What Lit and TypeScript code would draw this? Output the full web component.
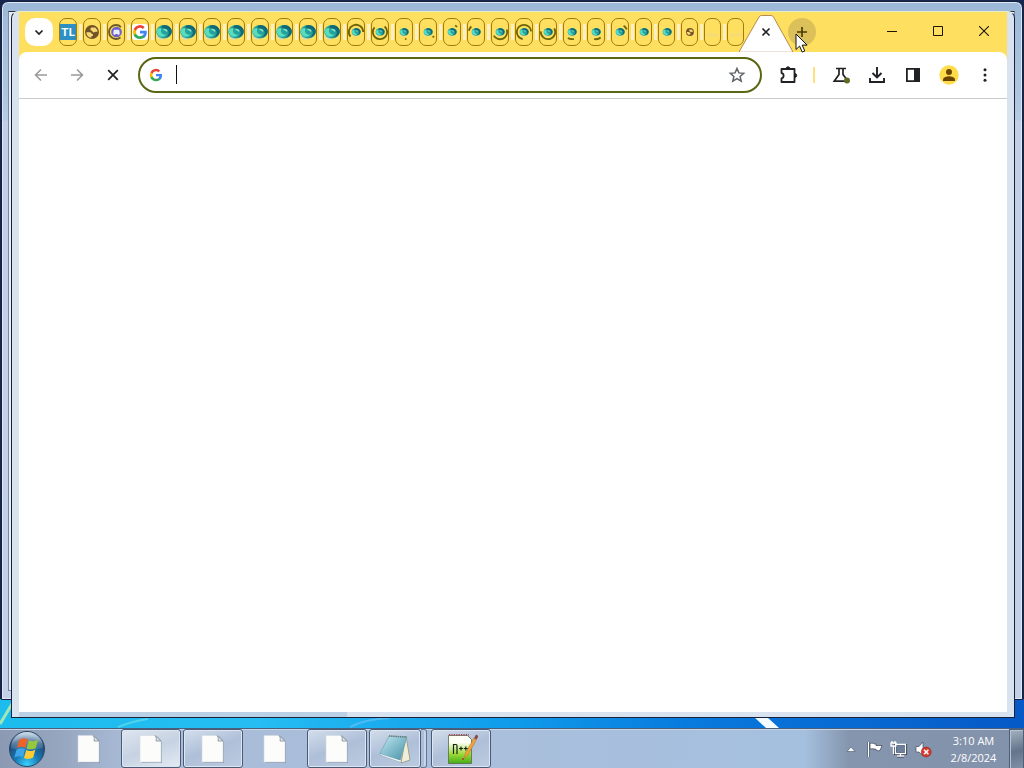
import { LitElement, html, svg, css, nothing } from "lit";
import { customElement, property } from "lit/decorators.js";

type Tab = { kind: string; title: string; from?: number; sweep?: number };

const swirl = (n: number): Tab[] =>
  Array.from({ length: n }, () => ({ kind: "swirl", title: "Swirl page" }));
const busy = (from: number, sweep: number): Tab => ({ kind: "busy", title: "Loading page", from, sweep });

const TABS: Tab[] = [
  { kind: "tl", title: "TL" },
  { kind: "globe", title: "Globe" },
  { kind: "chat", title: "Chat" },
  { kind: "google", title: "Google" },
  ...swirl(8),
  busy(140, 220),
  busy(-50, 270),
  busy(70, 12),
  busy(35, 14),
  busy(-65, 20),
  busy(190, 40),
  busy(-20, 170),
  busy(100, 255),
  busy(-30, 215),
  busy(75, 50),
  busy(50, 55),
  busy(-60, 40),
  busy(0, 0),
  busy(0, 0),
  { kind: "smallglobe", title: "Globe" },
  { kind: "blank", title: "New page" },
  { kind: "blank", title: "New page" },
];

const arc = (from: number, sweep: number, r: number) => {
  const p = (deg: number) => {
    const a = (deg * Math.PI) / 180;
    return `${(8 + r * Math.cos(a)).toFixed(2)} ${(8 + r * Math.sin(a)).toFixed(2)}`;
  };
  return `M${p(from)}A${r} ${r} 0 ${sweep > 180 ? 1 : 0} 1 ${p(from + sweep)}`;
};

const googleG = svg`
  <path fill="#4285f4" d="M14.8 8.2c0-.5 0-1-.1-1.4H8v2.7h3.8a3.3 3.3 0 0 1-1.4 2.1v1.8h2.3c1.3-1.2 2.1-3 2.1-5.2z"/>
  <path fill="#34a853" d="M8 15c1.900 0 3.500-.6 4.700-1.700l-2.300-1.700c-.6.400-1.400.700-2.400.700-1.800 0-3.400-1.200-3.900-2.900H1.700v1.800A7 7 0 0 0 8 15z"/>
  <path fill="#fbbc05" d="M4.100 9.400a4.200 4.200 0 0 1 0-2.700V4.900H1.700a7 7 0 0 0 0 6.300z"/>
  <path fill="#ea4335" d="M8 3.800c1 0 2 .4 2.700 1.100l2-2A7 7 0 0 0 1.700 4.900l2.400 1.800C4.600 5 6.200 3.800 8 3.800z"/>`;

const globe = svg`
  <circle cx="8" cy="8" r="7" fill="#70522a"/>
  <path fill="#f8d873" d="M2.400 8.200h3.200c1.600 0 2 .8 2 1.700h1.300v2.200H7.500v1.500C4.500 13.500 2.200 11.200 2.400 8.200zM7.500 3.600h3.400c1.500.9 2.500 2.300 2.700 4.200h-2.400c-.6.900-1.600.9-2.400.3-.5-.4-.5-1.500-1.500-1.500C6.200 6.600 6.300 3.700 7.500 3.600z"/>`;

const ball = svg`
  <path d="M1 11.500c1.500 2.500 4 3.500 6.500 3" stroke="#cfd9c4" stroke-width="1.500" fill="none"/>
  <ellipse cx="8" cy="7.700" rx="7.800" ry="6.700" fill="#27a29b"/>
  <path fill="#116a76" d="M7 1.200c5-.8 9 2.800 8.800 6.300-.2 3.600-3 5.600-6 6 2.400-1.900 3.500-4 2.700-6C11.500 4.900 9 3.700 5.500 4 5.200 2.700 5.800 1.500 7 1.200z"/>
  <path fill="#58dcc0" d="M1 5.800c1-1.400 2.800-1.900 4.600-1.100-1 1.600-.8 3.800.9 5.100 1.200.9 2.600 1.100 3.600.8-1 1.900-4 2.900-6.500 1.600C1.300 11 .2 8 1 5.800z"/>
  <path d="M7.500 6c1.600-.7 3.200-.1 3.300 1.500" stroke="#8fecd4" stroke-width="1.300" fill="none"/>`;

@customElement("tab-icon")
class TabIcon extends LitElement {
  static styles = css`
    :host { display: block; width: 16px; height: 16px; }
    .art { display: block; width: 16px; height: 16px; overflow: visible; }
    .badge { font: 700 12px "Lato", "Liberation Sans", sans-serif; fill: #fff; }
  `;
  @property({ attribute: false }) tab!: Tab;

  private art() {
    const t = this.tab;
    switch (t.kind) {
      case "tl":
        return svg`<rect width="16" height="16" fill="#2d8fc4"/><text class="badge" x="8" y="12" text-anchor="middle">TL</text>`;
      case "globe":
        return globe;
      case "chat":
        return svg`<path d="${arc(50, 265, 7)}" fill="none" stroke="#6b5a2a" stroke-width="1.800"/>
          <circle cx="8.500" cy="8" r="5.300" fill="#6b63c9"/>
          <path d="M5.300 10.200c0-2.800.5-4.500 1-4.500h4.400c.6 0 1 1.700 1 4.500l-1.500.7-.8-.8H7.600l-.8.8z" fill="#eceafc"/>`;
      case "google":
        return svg`<rect width="16" height="16" rx="3" fill="#fff"/>${googleG}`;
      case "swirl":
        return ball;
      case "busy":
        return svg`<g transform="translate(3.500 3.500) scale(.58)">${ball}</g>
          ${t.sweep ? svg`<path d="${arc(t.from!, t.sweep, 7.2)}" fill="none" stroke="#6f6305" stroke-width="1.800"/>` : nothing}`;
      case "smallglobe":
        return svg`<g transform="translate(3.500 3.500) scale(.56)">${globe}</g>`;
      default:
        return svg`<path d="M2 11h12" stroke="#f6da78" stroke-width="3"/>`;
    }
  }
  render() {
    return html`<svg class="art" viewBox="0 0 16 16" aria-hidden="true">${this.art()}</svg>`;
  }
}

@customElement("browser-window")
class BrowserWindow extends LitElement {
  static styles = css`
    :host { display: flex; flex-direction: column; box-sizing: border-box; background: #fff; }
    svg { display: block; flex: none; }
    button { border: 0; padding: 0; margin: 0; background: none; color: #202124; display: grid; place-items: center; flex: none; }
    .strip { display: flex; align-items: center; height: 40px; padding-left: 6px; background: #ffdf60; }
    .search { width: 28px; height: 28px; border-radius: 10px; background: #fff; margin-right: 6px; }
    .tabs { display: flex; gap: 6px; }
    .tab { position: relative; box-sizing: border-box; width: 18px; height: 28px; border: 1px solid #a17b10; border-radius: 7px; }
    .tab.slim { width: 17px; }
    .tab + .tab::before { content: ""; position: absolute; left: -5px; top: 5px; width: 3px; height: 16px; background: #fdf0c0; }
    .active { position: relative; align-self: stretch; width: 54px; margin-left: -5px; }
    .shape { position: absolute; left: 0; bottom: 0; }
    .close { position: relative; width: 54px; height: 40px; }
    .plus { width: 28px; height: 28px; border-radius: 50%; background: #dcc15b; margin-left: -5px; position: relative; }
    .caption { display: flex; margin-left: auto; align-self: stretch; }
    .caption button { width: 46px; height: 38px; }
    .bar-back { background: #ffdf60; }
    .bar { display: flex; align-items: center; height: 46px; border-bottom: 1px solid #c9cacc; border-radius: 8px 8px 0 0; background: #fff; padding: 0 8px; }
    .nav, .tools { display: flex; gap: 8px; }
    .nav button, .tools button { width: 28px; height: 28px; }
    .nav .off { color: #9a9b9d; }
    .box { flex: 1; display: flex; align-items: center; box-sizing: border-box; height: 36px; min-width: 0; margin: 0 12px 0 11px; padding: 0 9px 0 8px; border: 2px solid #5b6614; border-radius: 18px; background: #fff; }
    .caret { width: 1px; height: 19px; margin: 0 0 2px 12px; background: #111; }
    .field { flex: 1; min-width: 0; border: 0; outline: 0; padding: 0; background: none; font: 14px "Open Sans", sans-serif; color: #202124; }
    .star { color: #5f6368; width: 28px; height: 28px; }
    .rule { width: 2px; height: 16px; align-self: center; background: #ffe07a; margin: 0 4px 0 3px; }
    .page { flex: 1; }
  `;
  render() {
    return html`
      <div class="strip">
        <button class="search" aria-label="Search tabs">
          <svg width="16" height="16" viewBox="0 0 16 16" fill="none" stroke="currentColor" stroke-width="1.700"><path d="M4.500 6.500L8 10l3.500-3.500"/></svg>
        </button>
        <div class="tabs">
          ${TABS.map((t, i) => html`<button class="tab ${i > 23 ? "slim" : ""}" aria-label=${t.title}><tab-icon .tab=${t}></tab-icon></button>`)}
        </div>
        <div class="active">
          <svg class="shape" width="54" height="37" viewBox="0 0 54 37"><path d="M0 37L20 2Q21 .5 22.500 .5H32Q33.500 .5 34.500 2L54 37z" fill="#fff" stroke="#9b7440" stroke-width=".8"/><path d="M1 37H53" stroke="#fff" stroke-width="1"/></svg>
          <button class="close" aria-label="Close tab"><svg width="16" height="16" viewBox="0 0 16 16" stroke="currentColor" stroke-width="1.600"><path d="M4.500 4.500l7 7M11.500 4.500l-7 7"/></svg></button>
        </div>
        <button class="plus" aria-label="New tab"><svg width="16" height="16" viewBox="0 0 16 16" stroke="#4b3d0b" stroke-width="1.700"><path d="M8 3v10M3 8h10"/></svg></button>
        <div class="caption">
          <button aria-label="Minimize"><svg width="10" height="10" viewBox="0 0 10 10" stroke="#1c1500"><path d="M0 5.500h10"/></svg></button>
          <button aria-label="Maximize"><svg width="10" height="10" viewBox="0 0 10 10" fill="none" stroke="#1c1500"><path d="M.5.5h9v9H.5z"/></svg></button>
          <button aria-label="Close"><svg width="10" height="10" viewBox="0 0 10 10" stroke="#1c1500" stroke-width="1.100"><path d="M0 0l10 10M10 0L0 10"/></svg></button>
        </div>
      </div>
      <div class="bar-back"><div class="bar">
        <div class="nav">
          <button class="off" aria-label="Back"><svg width="16" height="16" viewBox="0 0 16 16" fill="none" stroke="currentColor" stroke-width="1.600"><path d="M14 8H3M8 2.500L2.500 8 8 13.500"/></svg></button>
          <button class="off" aria-label="Forward"><svg width="16" height="16" viewBox="0 0 16 16" fill="none" stroke="currentColor" stroke-width="1.600"><path d="M2 8h11M8 2.500L13.500 8 8 13.500"/></svg></button>
          <button aria-label="Stop"><svg width="16" height="16" viewBox="0 0 16 16" stroke="currentColor" stroke-width="1.700"><path d="M3.200 3.200l9.600 9.600M12.800 3.200l-9.600 9.600"/></svg></button>
        </div>
        <div class="box">
          <svg width="16" height="16" viewBox="-1 -1 18 18">${googleG}</svg>
          <span class="caret"></span>
          <input class="field" type="text" aria-label="Address and search bar" />
          <button class="star" aria-label="Bookmark"><svg width="18" height="18" viewBox="0 0 18 18" fill="none" stroke="currentColor" stroke-width="1.500"><path d="M9 2.500l1.900 4.400 4.800.4-3.600 3.200 1.100 4.700L9 12.700l-4.200 2.500 1.100-4.700-3.600-3.200 4.800-.4z"/></svg></button>
        </div>
        <div class="tools">
          <button aria-label="Extensions"><svg width="20" height="20" viewBox="0 0 20 20" fill="none" stroke="currentColor" stroke-width="1.800" stroke-linejoin="round"><path d="M3.500 4h13v13h-13v-3.700c2.800-.5 2.800-4.800 0-5.300z"/><path d="M8 4a2 2.200 0 0 1 4 0zM16.500 8.500a2.200 2 0 0 1 0 4z" fill="currentColor" stroke-width="1"/></svg></button>
          <span class="rule"></span>
          <button aria-label="Experiments"><svg width="20" height="20" viewBox="0 0 20 20" fill="none" stroke="currentColor" stroke-width="1.700"><path d="M5 3.500h10M8 4v5.500l-4.800 6.700h12M12 4v5.500l3 4"/><circle cx="16" cy="15.500" r="3" fill="#5d6b25" stroke="none"/></svg></button>
          <button aria-label="Downloads"><svg width="20" height="20" viewBox="0 0 20 20" fill="none" stroke="currentColor" stroke-width="1.900"><path d="M10 2v10M5.500 8L10 12.500 14.500 8M3 13v4h14v-4"/></svg></button>
          <button aria-label="Side panel"><svg width="20" height="20" viewBox="0 0 20 20" fill="none" stroke="currentColor" stroke-width="1.800"><path d="M3.900 3.900h12.200v12.200H3.900z"/><path d="M11 3h6v14h-6z" fill="currentColor" stroke="none"/></svg></button>
          <button aria-label="Profile"><svg width="20" height="20" viewBox="0 0 20 20"><circle cx="10" cy="10" r="9.700" fill="#ffdc4a"/><circle cx="10" cy="7" r="3" fill="#6b4400"/><path d="M4 16v-1.500c0-2.300 4-3.200 6-3.200s6 .9 6 3.200V16z" fill="#6b4400"/></svg></button>
          <button aria-label="Menu"><svg width="16" height="16" viewBox="0 0 16 16" fill="currentColor"><circle cx="8" cy="2.700" r="1.500"/><circle cx="8" cy="8" r="1.500"/><circle cx="8" cy="13.300" r="1.500"/></svg></button>
        </div>
      </div></div>
      <main class="page"></main>`;
  }
}

@customElement("task-bar")
class TaskBar extends LitElement {
  static styles = css`
    :host { display: flex; align-items: stretch; box-sizing: border-box; height: 40px; border-top: 1px solid #4a5f7b; box-shadow: inset 0 1px #c8d5e4;
      background: linear-gradient(90deg, #8b9ab2 0, #97a6bf 60px, #a9bcd8 130px, #a9bfdc 500px, #a5c0df calc(100% - 220px), #8495ad calc(100% - 175px), #8292aa 100%); }
    button { display: grid; place-items: center; border: 0; padding: 0; margin: 0; background: none; flex: none; }
    svg { display: block; }
    .start { width: 54px; }
    .apps { display: flex; gap: 2px; padding-left: 5px; }
    .app { box-sizing: border-box; width: 60px; border: 1px solid transparent; border-radius: 3px; }
    .open { border-color: #4a5a74; background: linear-gradient(160deg, #d3deec, #aebfd8 50%, #bccbe0); box-shadow: inset 0 0 0 1px #dde6f1; }
    .front { background: linear-gradient(160deg, #dde5ef, #c6d2e3 50%, #e3eaf3); }
    .stack { width: 52px; }
    .edges { box-sizing: border-box; width: 6px; margin: 0 2px 0 -2px; border: solid #63748f; border-width: 1px 1px 1px 0; border-radius: 0 3px 3px 0; box-shadow: inset -2px 0 #c9d6e7; }
    .tray { display: flex; align-items: center; margin-left: auto; }
    .icon { width: 24px; height: 30px; }
    .clock { width: 69px; margin: 0 1px 0 4px; color: #fff; text-align: center; font: 11px/17px "Open Sans", "Noto Sans", sans-serif; }
    .line { display: block; }
    .show { align-self: stretch; box-sizing: border-box; width: 15px; border: 1px solid #4f5f76; border-bottom: 0; background: linear-gradient(165deg, #a5b1c1, #64748a 55%, #8090a5); box-shadow: inset 1px 1px #b8c3d1; }
  `;
  private page() {
    return html`<svg width="26" height="30" viewBox="0 0 26 30"><path d="M3.500 2.500h16l4.500 5V29H3.500z" fill="#76849b" opacity=".6"/><path d="M2 1.500h15.500L23 7v21H2z" fill="#fcfcfa" stroke="#d5dae0" stroke-width=".6"/><path d="M17 1.500c2 1.500 1 4.500 1 5.500h5z" fill="#dfe5e8" stroke="#7e8c99" stroke-width=".8"/></svg>`;
  }
  render() {
    return html`
      <button class="start" aria-label="Start">
        <svg width="38" height="38" viewBox="0 0 38 38">
          <defs>
            <radialGradient id="orb" cx=".5" cy=".95" r=".9"><stop offset="0" stop-color="#38d3ff"/><stop offset=".4" stop-color="#1779b5"/><stop offset=".8" stop-color="#1f4876"/><stop offset="1" stop-color="#7fa0bd"/></radialGradient>
            <linearGradient id="shine" x2="0" y2="1"><stop offset="0" stop-color="#e3eef7" stop-opacity=".75"/><stop offset="1" stop-color="#c2d9ea" stop-opacity=".1"/></linearGradient>
          </defs>
          <circle cx="19" cy="19" r="17.500" fill="url(#orb)" stroke="#2b4665"/>
          <path d="M3 18a16 16 0 0 1 32 0c-9 3-22 3-32 0z" fill="url(#shine)"/>
          <path d="M11.200 10c3-2.400 6-2 8.500-.4l-2.300 8.200c-2.500-1.500-5.400-1.500-8.500.4z" fill="#ee6327"/>
          <path d="M20.900 10.200c2.800 1.400 5.800 1.400 9.200-.6l-2.300 8.300c-3.300 1.900-6.300 1.800-9.200.5z" fill="#94c83d"/>
          <path d="M8.500 19.700c3.200-2 6.200-1.900 8.600-.4l-2.200 8c-2.600-1.500-5.400-1.400-8.600.5z" fill="#3ea5e8"/>
          <path d="M18.200 20c2.800 1.300 5.900 1.300 9.200-.6l-2.200 8.200c-3.300 1.900-6.400 1.800-9.200.5z" fill="#ffcb35"/>
        </svg>
      </button>
      <div class="apps">
        <button class="app" aria-label="Document">${this.page()}</button>
        <button class="app open front" aria-label="Document">${this.page()}</button>
        <button class="app open" aria-label="Document">${this.page()}</button>
        <button class="app" aria-label="Document">${this.page()}</button>
        <button class="app open" aria-label="Document">${this.page()}</button>
        <button class="app open stack" aria-label="Notepad">
          <svg width="34" height="32" viewBox="0 0 34 32"><defs><linearGradient id="np" x2="1" y2="1"><stop offset="0" stop-color="#c4e8f0"/><stop offset=".6" stop-color="#76b4c5"/><stop offset="1" stop-color="#4c8fa5"/></linearGradient></defs>
            <path d="M28 3l4 24-9 3z" fill="#f1eed8" stroke="#8c8a70" stroke-width=".7"/><path d="M2 22l21 7.500V27L3 20z" fill="#fafafa" stroke="#84a2aa" stroke-width=".5"/><path d="M11 3l18 1-7 23L2 20.500z" fill="url(#np)" stroke="#6a9eac" stroke-width=".6"/><path d="M11 3l17.500 1" stroke="#677" stroke-width="1.600" stroke-dasharray="1.200 1"/></svg>
        </button>
        <span class="edges"></span>
        <button class="app open" aria-label="Text editor">
          <svg width="34" height="34" viewBox="0 0 34 34"><defs><linearGradient id="ed" x2="0" y2="1"><stop offset=".25" stop-color="#fdfef5"/><stop offset=".65" stop-color="#9edb3a"/><stop offset="1" stop-color="#45ac16"/></linearGradient></defs>
            <path d="M4.500 3.500h19l4 4v24h-23z" fill="url(#ed)" stroke="#5a6a4c" stroke-width=".8"/><path d="M5 2.800h20" stroke="#a33f55" stroke-width="1.400" stroke-dasharray="1.200 1.200"/><path d="M9.500 22V12.500h2.500q1 0 1 1.500v8M15 16.500h4M17 14.500v4M19.800 16.500h4M21.800 14.500v4" fill="none" stroke="#142514" stroke-width="1.200"/><path d="M20.500 26l1-5L30 6l2.500 1.500L24 23z" fill="#f2a13b" stroke="#a8702c" stroke-width=".5"/><path d="M30 6.200L32 2.500l2.500 1.600-2 3.500z" fill="#8b4a42"/><path d="M18 27h2" stroke="#b43326" stroke-width="1.500"/></svg>
        </button>
      </div>
      <div class="tray">
        <button class="icon" aria-label="Show hidden icons"><svg width="10" height="8" viewBox="0 0 10 8"><path d="M1 6.500L5 2l4 4.500z" fill="#fff" stroke="#44546b" stroke-width=".6"/></svg></button>
        <button class="icon" aria-label="Action center"><svg width="18" height="18" viewBox="0 0 18 18"><path d="M2.500 2v15" stroke="#354358" stroke-width="3"/><path d="M2.500 2v15" stroke="#fff" stroke-width="1.500"/><path d="M4 3.500c3-1.300 4 .8 6 .6v1.400h6l-2 5c-2 .8-3-.5-4.300-.7V9C7.500 9.200 6.500 8.500 4 9z" fill="#fff" stroke="#354358" stroke-width=".7"/></svg></button>
        <button class="icon" aria-label="Network"><svg width="18" height="18" viewBox="0 0 18 18" fill="none"><path d="M5.500 5.500h10v8h-10zM7 16h7M10.500 14v2" stroke="#2d3b50" stroke-width="3.200"/><path d="M5.500 4.500h10v9h-10zM7 16h7M10.500 14v2M1 3h5v3H1zM3.500 6v8M2 1v2M5 1v2" stroke="#fff" stroke-width="1.300"/><path d="M6.500 5.500h8.500v7H6.500z" fill="#6d7f98"/></svg></button>
        <button class="icon" aria-label="Volume muted"><svg width="18" height="18" viewBox="0 0 18 18"><path d="M2 6.500h3L9 2v14l-4-4H2z" fill="#fff" stroke="#415067" stroke-width=".7"/><circle cx="12.200" cy="12" r="5" fill="#d6372e" stroke="#8d2525" stroke-width=".5"/><path d="M10 9.800l4.400 4.400M14.400 9.800L10 14.200" stroke="#fff" stroke-width="1.600"/></svg></button>
        <time class="clock"><span class="line">3:10 AM</span><span class="line">2/8/2024</span></time>
        <button class="show" aria-label="Show desktop"></button>
      </div>`;
  }
}

@customElement("app-root")
class AppRoot extends LitElement {
  static styles = css`
    :host { display: flex; flex-direction: column; height: 100vh; min-height: 400px; overflow: hidden; background: #101a3c; }
    .desk { position: relative; flex: 1; overflow: hidden; background: linear-gradient(90deg, #1cbcee 0, #25bdf2 25%, #0f9bea 50%, #0879dd 68%, #0659c7 100%); }
    .desk::before { content: ""; position: absolute; inset: 0 0 29px; background: #17264f; }
    .streaks { position: absolute; left: 0; bottom: 0; width: 100%; height: 30px; }
    .back { position: absolute; inset: 1px 1px 28px 1px; box-sizing: border-box; border: 1px solid #17213c; border-radius: 7px 7px 0 0; background: linear-gradient(#9db8d8 0, #a9c1dd 60px, #b5cae3 118px, #c3cfe6 119px, #c2d0e8 100%); box-shadow: inset 0 0 0 1px #dce8f5; }
    .inner { position: absolute; inset: 9px 7px 8px 6px; background: #e8edf5; border: 1px solid #77889f; border-top-color: #26324a; }
    .front { position: absolute; inset: 11px 9px 10px 11px; box-sizing: border-box; display: flex; border: 1px solid #17213c; border-radius: 7px 7px 0 0; border-top-color: #e8edc9; padding: 0 7px 5px; background: #d8e3ef; }
    .progress { position: absolute; left: 7px; bottom: 0; width: 328px; height: 5px; background: #b9d0e5; }
    .front browser-window { flex: 1; min-width: 0; position: relative; }
    .pointer { position: absolute; left: 795px; top: 33px; }
  `;
  render() {
    return html`
      <div class="desk">
        <svg class="streaks" viewBox="0 0 1024 30" preserveAspectRatio="none" aria-hidden="true"><path d="M0 26L12 6" stroke="#9fe8b5" stroke-width="3"/><path d="M118 29q15-6 30-8" stroke="#6fe0ea" stroke-width="2" fill="none" opacity=".6"/><path d="M350 29q15-8 40-9" stroke="#63bff5" stroke-width="2" fill="none" opacity=".7"/><path d="M754 19h13l12 11h-13z" fill="#f3fbff"/></svg>
        <div class="back"><div class="inner"></div></div>
        <div class="front">
          <browser-window></browser-window>
          <div class="progress"></div>
        </div>
        <svg class="pointer" width="13" height="21" viewBox="0 0 13 21" aria-hidden="true"><path d="M1 1v15.500l3.600-3.400 2.600 6 2.600-1.100-2.600-5.900h4.900z" fill="#fff" stroke="#111"/></svg>
      </div>
      <task-bar></task-bar>`;
  }
}
